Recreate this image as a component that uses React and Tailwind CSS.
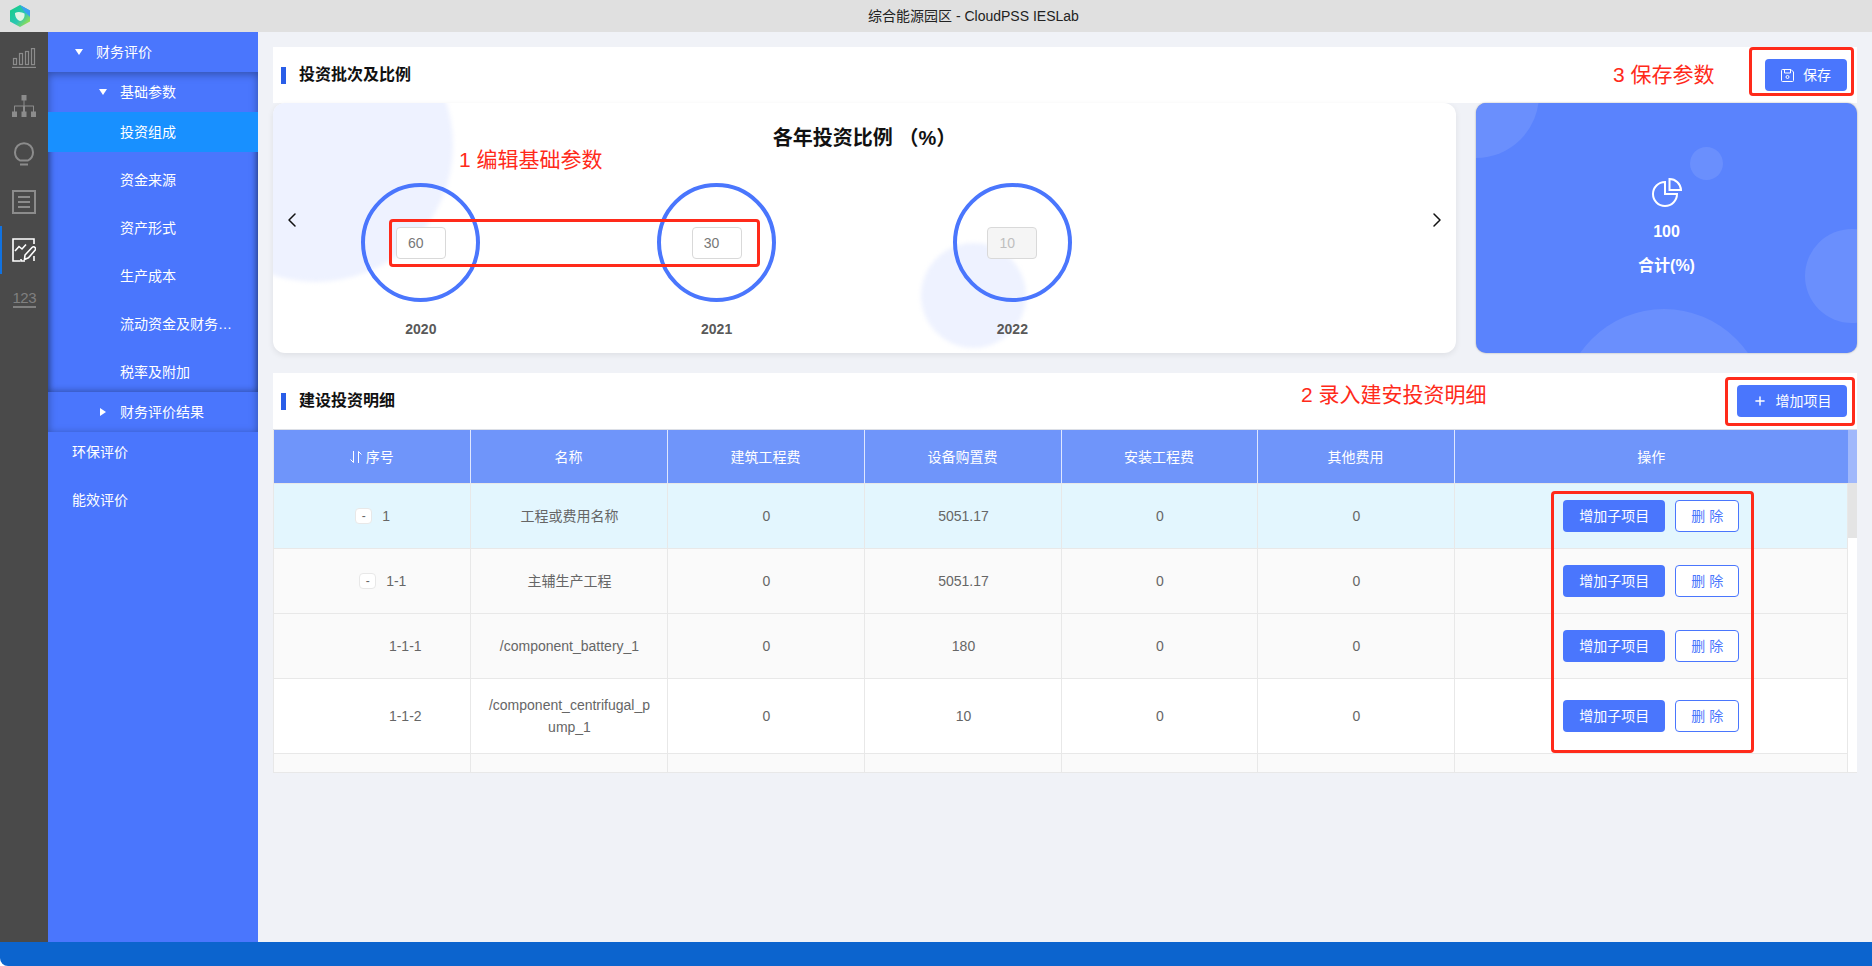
import { ChevronLeft, ChevronRight, Plus } from "lucide-react";

const font = { fontFamily: '"Liberation Sans", "Noto Sans CJK SC", sans-serif' };

const years = [
  { year: "2020", value: "60" },
  { year: "2021", value: "30" },
  { year: "2022", value: "10", disabled: true },
];

const columns = ["名称", "建筑工程费", "设备购置费", "安装工程费", "其他费用", "操作"];

const rows = [
  { id: "1", name: "工程或费用名称", equip: "5051.17", toggle: true, height: "h-[65px]", bg: "bg-[#e3f6fe]" },
  { id: "1-1", name: "主辅生产工程", equip: "5051.17", toggle: true, indent: "pl-[37px]", height: "h-[65px]", bg: "bg-[#fafafa]" },
  { id: "1-1-1", name: "/component_battery_1", equip: "180", indent: "pl-[82px]", height: "h-[65px]", bg: "bg-[#fafafa]" },
  { id: "1-1-2", name: "/component_centrifugal_pump_1", equip: "10", indent: "pl-[82px]", height: "h-[75px]", bg: "bg-white" },
];

const gridCols = "grid-cols-[196.5px_197px_197px_197px_196px_197px_393.5px]";

function Caret({ open }) {
  return open ? (
    <svg width="8" height="6" viewBox="0 0 8 6" className="shrink-0">
      <path d="M0 0H8L4 6Z" fill="#fff" />
    </svg>
  ) : (
    <svg width="6" height="8" viewBox="0 0 6 8" className="shrink-0">
      <path d="M0 0V8L6 4Z" fill="#fff" />
    </svg>
  );
}

function RailItem({ children, active }) {
  return (
    <div className="relative flex h-12 items-center justify-center">
      {active && <div className="absolute left-0 top-0 h-12 w-[2px] bg-[#1172e0]" />}
      {children}
    </div>
  );
}

function Rail() {
  return (
    <div className="flex w-12 shrink-0 flex-col bg-[#4a4a4a] pt-[2px]">
      <RailItem>
        <svg width="24" height="20" viewBox="0 0 24 20" fill="none" stroke="#8c8c8c" strokeWidth="1.2">
          <rect x="1.5" y="10.5" width="3" height="6" />
          <rect x="7.5" y="5.5" width="3" height="11" />
          <rect x="13.5" y="3.5" width="3" height="13" />
          <rect x="19.5" y="0.6" width="3" height="16" />
          <path d="M0 19.4H24" />
        </svg>
      </RailItem>
      <RailItem>
        <svg width="24" height="22" viewBox="0 0 24 22" fill="#8c8c8c">
          <rect x="9.5" y="0" width="5" height="5.5" />
          <rect x="0" y="16.5" width="5" height="5.5" />
          <rect x="9.5" y="16.5" width="5" height="5.5" />
          <rect x="19" y="16.5" width="5" height="5.5" />
          <path d="M11.5 5H12.5V10.5H21.5Q22 10.5 22 11V17H21V11.5H13V17H11V11.5H3V17H2V11Q2 10.5 2.5 10.5H11.5Z" />
        </svg>
      </RailItem>
      <RailItem>
        <svg width="20" height="24" viewBox="0 0 20 24" fill="none" stroke="#8c8c8c" strokeWidth="2">
          <path d="M6 18.5C3 16.8 1 14 1 10.2C1 5.2 5 1.2 10 1.2C15 1.2 19 5.2 19 10.2C19 14 17 16.8 14 18.5Z" />
          <path d="M6 22.5H14" />
        </svg>
      </RailItem>
      <RailItem>
        <svg width="24" height="24" viewBox="0 0 24 24" fill="none" stroke="#8c8c8c" strokeWidth="2">
          <rect x="1" y="1" width="22" height="22" />
          <path d="M6 7H18M6 12H18M6 17H18" />
        </svg>
      </RailItem>
      <RailItem active>
        <svg width="24" height="24" viewBox="0 0 24 24" fill="none" stroke="#fff" strokeWidth="1.6">
          <path d="M8 23H1V1H22V6" />
          <path d="M3 13L7 8.5L10 11L14 6.5" />
          <path d="M9 21V23H13" />
          <path d="M12.5 21.5L13 17L20 9.5C21 8.5 22.3 8.700 23 9.500C23.700 10.300 23.700 11.500 23 12.300L16.500 19.800Z" />
          <path d="M22 23V18" />
        </svg>
      </RailItem>
      <RailItem>
        <div className="w-[23px] border-b-2 border-[#808080] text-center text-[15px] leading-[17px] tracking-[-0.5px] text-[#808080]">
          123
        </div>
      </RailItem>
    </div>
  );
}

function MenuRow({ children, className }) {
  return <div className={`flex h-10 items-center text-sm text-white ${className}`}>{children}</div>;
}

function Sidebar() {
  return (
    <div className="w-[210px] shrink-0 bg-[#4a76fd]">
      <MenuRow className="pl-[27px]">
        <Caret open />
        <span className="ml-[13px]">财务评价</span>
      </MenuRow>
      <div className="shadow-[inset_0_2px_8px_rgba(0,0,0,0.35)]">
        <MenuRow className="pl-[51px]">
          <Caret open />
          <span className="ml-[13px]">基础参数</span>
        </MenuRow>
        <div className="shadow-[inset_0_2px_6px_rgba(0,0,0,0.25),inset_0_-2px_6px_rgba(0,0,0,0.2)]">
          <MenuRow className="bg-[#1890ff] pl-[72px]">投资组成</MenuRow>
          <MenuRow className="mt-2 pl-[72px]">资金来源</MenuRow>
          <MenuRow className="mt-2 pl-[72px]">资产形式</MenuRow>
          <MenuRow className="mt-2 pl-[72px]">生产成本</MenuRow>
          <MenuRow className="mt-2 pl-[72px]">流动资金及财务…</MenuRow>
          <MenuRow className="mt-2 pl-[72px]">税率及附加</MenuRow>
        </div>
        <MenuRow className="pl-[52px]">
          <Caret />
          <span className="ml-[14px]">财务评价结果</span>
        </MenuRow>
      </div>
      <MenuRow className="pl-6">环保评价</MenuRow>
      <MenuRow className="mt-2 pl-6">能效评价</MenuRow>
    </div>
  );
}

function SectionHeader({ title, children }) {
  return (
    <div className="flex h-14 items-center justify-between bg-white pl-2 pr-[10px]">
      <div className="flex items-center">
        <div className="h-[17px] w-[5px] bg-[#2a5ee8]" />
        <h2 className="ml-[13px] text-base font-semibold text-[#111]">{title}</h2>
      </div>
      {children}
    </div>
  );
}

function YearCell({ year, value, disabled }) {
  return (
    <div className="flex flex-col items-center">
      <div className="flex size-[119px] items-center justify-center rounded-full border-4 border-[#4a76fd]">
        <input
          defaultValue={value}
          disabled={disabled}
          className={`h-8 w-[50px] rounded border border-[#d9d9d9] pl-[11px] text-sm outline-none ${
            disabled ? "bg-[#f5f5f5] text-[#bfbfbf]" : "bg-white text-[#777]"
          }`}
        />
      </div>
      <div className="mt-[17px] text-sm font-bold leading-5 text-[#595959]">{year}</div>
    </div>
  );
}

function RatioCard() {
  return (
    <div className="relative h-[250px] w-[1183px] overflow-hidden rounded-[12px] bg-white shadow-[0_2px_6px_rgba(0,0,0,0.08)]">
      <div className="absolute -left-[94px] -top-[95px] size-[274px] rounded-full bg-[#eef2ff] blur-[2px]" />
      <div className="absolute left-[648px] top-[140px] size-[105px] rounded-full bg-[#eef2ff] blur-[2px]" />
      <div className="relative pt-[23px]">
        <h3 className="h-6 text-center text-xl font-bold leading-6 text-[#111]">各年投资比例 （%）</h3>
        <div className="mt-[33px] grid grid-cols-4">
          {years.map((y) => (
            <YearCell key={y.year} {...y} />
          ))}
        </div>
      </div>
      <ChevronLeft size={24} strokeWidth={1.5} className="absolute left-[7px] top-[105px] text-[#111]" />
      <ChevronRight size={24} strokeWidth={1.5} className="absolute right-[7px] top-[105px] text-[#111]" />
    </div>
  );
}

function TotalCard() {
  return (
    <div className="relative flex h-[250px] w-[381px] flex-col items-center overflow-hidden rounded-[10px] bg-[#5a83fd] pt-[75px] text-white shadow-[0_0_2px_rgba(0,0,0,0.35)]">
      <div className="absolute -left-[63px] -top-[71px] size-[126px] rounded-full bg-[#6a8ffd]" />
      <div className="absolute left-[214px] top-[44px] size-[33px] rounded-full bg-[#6a8ffd]" />
      <div className="absolute left-[329px] top-[126px] size-[94px] rounded-full bg-[#6a8ffd]" />
      <div className="absolute left-[86px] top-[206px] size-[204px] rounded-full bg-[#6a8ffd]" />
      <svg width="30" height="30" viewBox="0 0 30 30" fill="none" stroke="#fff" strokeWidth="2" className="relative">
        <path d="M13 4A12 12 0 1 0 25 16H13Z" />
        <path d="M17.5 1V12H29A11.5 11.5 0 0 0 17.5 1Z" />
      </svg>
      <div className="relative mt-[12px] text-base font-bold leading-6">100</div>
      <div className="relative mt-[10px] text-base font-bold leading-6">合计(%)</div>
    </div>
  );
}

function Table() {
  return (
    <div className="relative flex h-[344px] overflow-hidden border-b border-t border-b-[#e8e8e8] border-t-[#dcdfe6] bg-white">
      <div className="w-[1575px] shrink-0">
        <div className={`grid h-[53px] ${gridCols} border-l border-[#e8e8e8] bg-[#6f95fa] text-sm text-white`}>
          <div className="flex items-center justify-center border-r border-[#dfe7fe]">
            <svg width="12" height="12" viewBox="0 0 12 12" fill="none" stroke="#fff" strokeWidth="1">
              <path d="M3.5 0V11.5L0.5 8.5" />
              <path d="M8.5 12V0.5L11.5 3.5" />
            </svg>
            <span className="ml-1">序号</span>
          </div>
          {columns.map((c, i) => (
            <div key={c} className={`flex items-center justify-center ${i < 5 ? "border-r border-[#dfe7fe]" : ""}`}>
              {c}
            </div>
          ))}
        </div>
        {rows.map((r) => (
          <Row key={r.id} row={r} />
        ))}
        <div className={`grid h-5 ${gridCols} border-l border-r border-t border-[#e8e8e8] bg-[#fafafa]`}>
          {[0, 1, 2, 3, 4, 5, 6].map((i) => (
            <div key={i} className={i < 6 ? "border-r border-[#e8e8e8]" : ""} />
          ))}
        </div>
      </div>
      <div className="w-[9px] shrink-0">
        <div className="h-[53px] bg-[#a0b8fb]" />
        <div className="h-[55px] bg-[#e4e4e4]" />
      </div>
    </div>
  );
}

function Row({ row }) {
  const cell = "flex items-center justify-center border-r border-[#e8e8e8] pl-[17px] pr-[15px] text-center";
  return (
    <div
      className={`grid ${gridCols} border-l border-r border-t border-[#e8e8e8] text-sm leading-[22px] text-[#666] ${row.height} ${row.bg}`}
    >
      <div className={`${cell} ${row.indent || ""}`}>
        {row.toggle && (
          <span className="mr-[10px] flex h-4 w-[17px] items-center justify-center rounded-sm border border-[#e8e8e8] bg-white text-xs leading-none">
            -
          </span>
        )}
        {row.id}
      </div>
      <div className={`${cell} break-all`}>{row.name}</div>
      <div className={cell}>0</div>
      <div className={cell}>{row.equip}</div>
      <div className={cell}>0</div>
      <div className={cell}>0</div>
      <div className="flex items-center justify-center gap-[10px]">
        <button className="h-8 w-[102px] rounded bg-[#4a76fd] text-sm text-white">增加子项目</button>
        <button className="h-8 w-16 rounded border border-[#4a76fd] bg-white text-sm text-[#4a76fd]">删 除</button>
      </div>
    </div>
  );
}

export default function App() {
  return (
    <div style={font} className="flex h-screen w-full flex-col overflow-hidden bg-white">
      <div className="flex h-8 shrink-0 items-center bg-[#e0e0e0] pl-[10px] pr-0">
        <svg width="20" height="22" viewBox="0 0 20 22" className="shrink-0">
          <defs>
            <linearGradient id="hex" x1="0" y1="0" x2="1" y2="1">
              <stop offset="0" stopColor="#12cf7f" />
              <stop offset="0.55" stopColor="#2bc6b4" />
              <stop offset="1" stopColor="#c2ea25" />
            </linearGradient>
          </defs>
          <path d="M10 0L20 5.5V16.5L10 22L0 16.5V5.5Z" fill="url(#hex)" />
          <path d="M10 0L20 5.5V12L14 6Z" fill="#3b9ff2" />
          <path d="M5 8C8 6 12 7 14.500 8.500C15 12 13 16 10 16C7 15 5 12 5 8Z" fill="#dff5e4" />
        </svg>
        <div className="ml-[838px] text-sm text-[#222]">综合能源园区 - CloudPSS IESLab</div>
      </div>

      <div className="flex min-h-0 flex-1">
        <Rail />
        <Sidebar />
        <div className="relative min-w-0 flex-1 bg-[#f0f2f7] pl-[15px] pr-[15px] pt-[15px]">
          <SectionHeader title="投资批次及比例">
            <button className="flex h-8 w-[82px] items-center justify-center rounded bg-[#4a76fd] text-sm text-white">
              <svg width="13" height="13" viewBox="0 0 13 13" fill="none" stroke="#fff" strokeWidth="1" className="mr-[9px]">
                <path d="M1.500 0.500H10L12.500 3V11.500Q12.500 12.500 11.500 12.500H1.500Q0.500 12.500 0.500 11.500V1.500Q0.500 0.500 1.500 0.500Z" />
                <path d="M3.500 0.500V4H9.500V0.500" />
                <circle cx="6.500" cy="8" r="1.500" />
              </svg>
              保存
            </button>
          </SectionHeader>
          <div className="flex justify-between">
            <RatioCard />
            <TotalCard />
          </div>

          <div className="mt-5">
            <SectionHeader title="建设投资明细">
              <button className="flex h-8 w-[110px] items-center justify-center rounded bg-[#4a76fd] text-sm text-white">
                <Plus size={14} strokeWidth={2.5} className="mr-[9px]" />
                增加项目
              </button>
            </SectionHeader>
            <Table />
          </div>

          {/* red annotations */}
          <div className="absolute left-[201px] top-[114px] text-[21px] leading-7 text-[#ff2a1a]">1 编辑基础参数</div>
          <div className="absolute left-[1043px] top-[349px] text-[21px] leading-7 text-[#ff2a1a]">2 录入建安投资明细</div>
          <div className="absolute left-[1355px] top-[29px] text-[21px] leading-7 text-[#ff2a1a]">3 保存参数</div>
          <div className="absolute left-[131px] top-[187px] h-12 w-[371px] rounded-sm border-[3px] border-[#ff2a1a]" />
          <div className="absolute left-[1491px] top-[15px] h-[49px] w-[105px] rounded-sm border-[3px] border-[#ff2a1a]" />
          <div className="absolute left-[1467px] top-[345px] h-[49px] w-[130px] rounded-sm border-[3px] border-[#ff2a1a]" />
          <div className="absolute left-[1293px] top-[459px] h-[262px] w-[203px] rounded-sm border-[3px] border-[#ff2a1a]" />
        </div>
      </div>

      <div className="h-6 shrink-0 rounded-bl-lg bg-[#0c64ce]" />
    </div>
  );
}
